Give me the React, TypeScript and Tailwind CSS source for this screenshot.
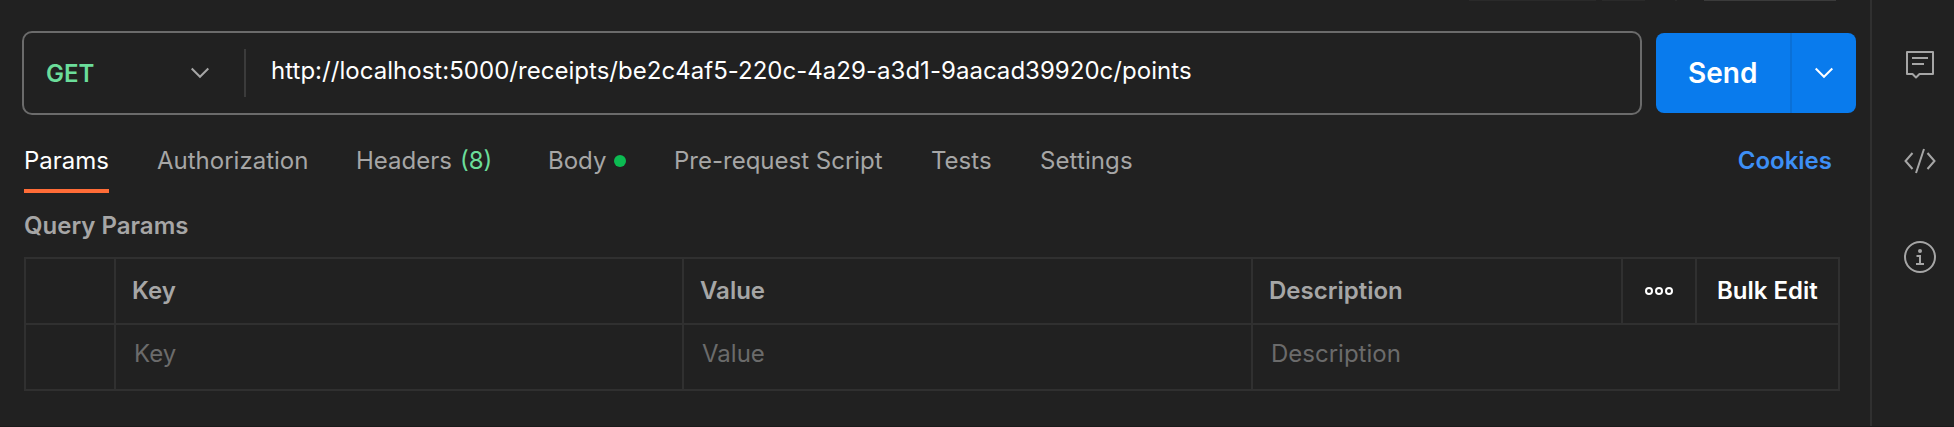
import React from "react";

const tabs = [
  { label: "Params", box: "w-[85px] mr-[48px]", active: true },
  { label: "Authorization", box: "w-[152px] mr-[47px]" },
  { label: "Headers", box: "w-[135px] mr-[57px]", count: "(8)" },
  { label: "Body", box: "w-[79px] mr-[47px]", dot: true },
  { label: "Pre-request Script", box: "w-[209px] mr-[48px]" },
  { label: "Tests", box: "w-[61px] mr-[48px]" },
  { label: "Settings", box: "w-[94px] tracking-[0.1px]" },
];

function Chevron({ className }: { className: string }) {
  return (
    <svg className={className} width="20" height="12" viewBox="0 0 20 12" fill="none" stroke="currentColor" strokeWidth="2">
      <path d="M1.7 1.5 10 9.8 18.3 1.5" />
    </svg>
  );
}

function UrlBar() {
  return (
    <div className="flex h-[84px] w-[1834px]">
      <div className="flex w-[1620px] items-center rounded-[10px] border-2 border-[#6b6b6b]">
        <div className="flex w-[220px] items-center justify-between pl-[22px] pr-[34px]">
          <span className="pt-[2px] font-semibold text-[#6bdd9a]">GET</span>
          <Chevron className="text-[#a6a6a6]" />
        </div>
        <div className="h-12 w-[2px] bg-[#3b3b3b]" />
        <span className="pb-[5px] pl-[25px] tracking-[0.03px] text-white">
          http://localhost:5000/receipts/be2c4af5-220c-4a29-a3d1-9aacad39920c/points
        </span>
      </div>
      <div className="my-[2px] ml-[14px] flex w-[200px] rounded-lg bg-[#097bed] text-white">
        <div className="flex w-[136px] items-center border-r-2 border-[#0a70d7] pl-8 pt-[2px] text-[28px] font-semibold">Send</div>
        <div className="flex flex-1 items-center justify-center">
          <Chevron className="text-white" />
        </div>
      </div>
    </div>
  );
}

function Tabs() {
  return (
    <div className="mt-[23px] flex h-[55px] pl-[2px] text-[#a6a6a6]">
      {tabs.map((t) => (
        <div
          key={t.label}
          className={`flex shrink-0 items-center whitespace-nowrap border-b-4 pb-[5px] ${t.box} ${
            t.active ? "border-[#ff6c37] text-white" : "border-transparent"
          }`}
        >
          {t.label}
          {t.count && <span className="ml-2 text-[#6bdd9a]">{t.count}</span>}
          {t.dot && <span className="ml-2 size-3 rounded-full bg-[#0cbb52]" />}
        </div>
      ))}
      <div className="ml-auto mr-[38px] flex items-center pb-[9px] font-semibold text-[#3d8ff5]">Cookies</div>
    </div>
  );
}

function ParamsTable() {
  const cell = "border-2 border-[#303030] p-0 text-left";
  return (
    <table className="ml-[2px] mt-[14px] w-[1816px] table-fixed border-collapse">
      <colgroup>
        <col className="w-[90px]" />
        <col className="w-[568px]" />
        <col className="w-[569px]" />
        <col className="w-[370px]" />
        <col className="w-[74px]" />
        <col className="w-[143px]" />
      </colgroup>
      <tbody>
        <tr className="h-[66px] font-semibold text-[#a6a6a6]">
          <td className={cell} />
          <td className={`${cell} pl-4!`}>Key</td>
          <td className={`${cell} pl-4!`}>Value</td>
          <td className={`${cell} pl-4!`}>Description</td>
          <td className={cell}>
            <svg className="mx-auto" width="30" height="10" viewBox="0 0 30 10" fill="none" stroke="#fff" strokeWidth="2">
              <circle cx="5" cy="5" r="3" />
              <circle cx="15" cy="5" r="3" />
              <circle cx="25" cy="5" r="3" />
            </svg>
          </td>
          <td className={`${cell} pl-[20px]! text-white`}>Bulk Edit</td>
        </tr>
        <tr className="h-[66px] text-[#6b6b6b]">
          <td className={cell} />
          <td className={`${cell} pb-1.5! pl-[18px]!`}>Key</td>
          <td className={`${cell} pb-1.5! pl-[18px]!`}>Value</td>
          <td colSpan={3} className={`${cell} pb-1.5! pl-[18px]!`}>Description</td>
        </tr>
      </tbody>
    </table>
  );
}

function Sidebar() {
  return (
    <div className="flex w-[84px] shrink-0 flex-col items-center border-l-2 border-[#303030] pl-[14px] pt-12 text-[#a6a6a6]">
      <svg width="32" height="32" viewBox="0 0 32 32" fill="none" stroke="currentColor" strokeWidth="2">
        <path d="M3 4H29V26H15.5L12 29.5L8.5 26H3Z" strokeLinejoin="round" />
        <path d="M8 10H24M8 16H20" />
      </svg>
      <svg className="mt-[65px]" width="32" height="32" viewBox="0 0 32 32" fill="none" stroke="currentColor" strokeWidth="2">
        <path d="M8.5 8 1.5 16 8.5 24M23.5 8 30.5 16 23.5 24M20 4 12 28" />
      </svg>
      <svg className="mt-16" width="32" height="32" viewBox="0 0 32 32" fill="none" stroke="currentColor" strokeWidth="2">
        <circle cx="16" cy="16" r="15" />
        <path d="M12.5 15H16V23M12 23H20" />
        <circle cx="16" cy="10" r="2" fill="currentColor" stroke="none" />
      </svg>
    </div>
  );
}

export default function App() {
  return (
    <div className="flex h-[427px] w-[1954px] overflow-hidden border-b border-[#1a1a1a] bg-[#212121] font-['Inter',sans-serif] text-2xl">
      <div className="flex w-[1870px] shrink-0 flex-col pl-[22px]">
        <div className="flex h-[31px] items-start pl-[1447px]">
          <div className="h-px w-[127px] bg-[#2a2a2a]" />
          <div className="ml-[6px] h-px w-[43px] bg-[#2a2a2a]" />
          <div className="ml-[30px] h-px w-[2px] bg-[#2a2a2a]" />
          <div className="ml-[27px] h-px w-[132px] bg-[#3b3b3b]" />
        </div>
        <UrlBar />
        <Tabs />
        <h2 className="ml-[2px] mt-[15px] leading-[35px] font-semibold text-[#a6a6a6]">Query Params</h2>
        <ParamsTable />
      </div>
      <Sidebar />
    </div>
  );
}
